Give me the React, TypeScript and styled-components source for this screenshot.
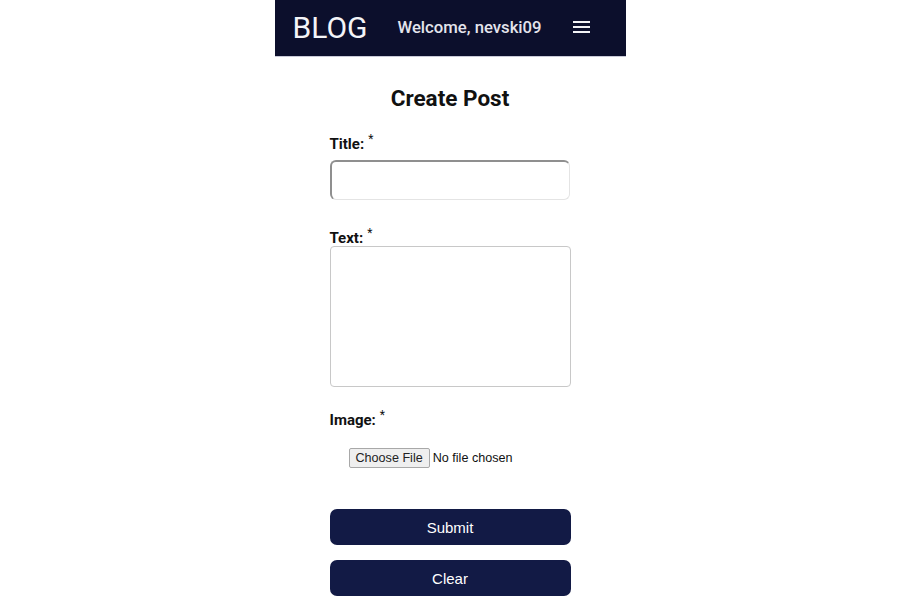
import React from "react";
import styled, { createGlobalStyle } from "styled-components";

const Global = createGlobalStyle`
  html, body { margin: 0; padding: 0; background: #ffffff; }
  body { font-family: Roboto, "Liberation Sans", sans-serif; }
`;

const Page = styled.div`
  width: 900px;
  display: flex;
  flex-direction: column;
  align-items: center;
`;

const Header = styled.header`
  width: 351px;
  height: 57px;
  box-sizing: border-box;
  background: #0c0f2c;
  border-bottom: 1px solid #c9cad8;
  display: flex;
  align-items: center;
  padding: 0 18px 2px;
`;

const Logo = styled.div`
  font-family: Roboto, sans-serif;
  font-size: 30px;
  color: #f4f4f8;
  margin-right: 30px;
`;

const Welcome = styled.div`
  font-family: Roboto, sans-serif;
  font-weight: 500;
  font-size: 16.7px;
  color: #e4e4ec;
  margin-right: 31px;
`;

const Burger = styled.svg`
  display: block;
`;

const Form = styled.form`
  width: 241px;
  display: flex;
  flex-direction: column;
  padding-top: 28px;
`;

const Heading = styled.h2`
  margin: 0;
  text-align: center;
  font-family: Roboto, sans-serif;
  font-weight: 700;
  font-size: 22.5px;
  line-height: 26px;
  color: #111;
`;

const Label = styled.label<{ $mt: number }>`
  display: block;
  margin-top: ${(p) => p.$mt}px;
  font-family: Roboto, sans-serif;
  font-weight: 700;
  font-size: 15px;
  line-height: 16px;
  color: #111;
`;

const Star = styled.span`
  font-weight: 400;
  font-size: 12px;
  line-height: 0;
  margin-left: 4px;
  position: relative;
  top: -6px;
`;

const TextInput = styled.input`
  box-sizing: border-box;
  width: 240px;
  height: 40px;
  margin-top: 8px;
  border-style: solid;
  border-width: 2px 1px 1px 2px;
  border-color: #8f8f8f #e4e4e4 #e4e4e4 #8f8f8f;
  border-radius: 6px;
  background: #fff;
  outline: none;
`;

const TextArea = styled.textarea`
  box-sizing: border-box;
  width: 241px;
  height: 141px;
  margin-top: 0;
  border: 1px solid #c8c8c8;
  border-radius: 4px;
  resize: none;
  outline: none;
`;

const FileRow = styled.div`
  margin-top: 20px;
  padding-left: 19px;
  display: flex;
  align-items: center;
  gap: 3px;
  font-family: "Liberation Sans", Arial, sans-serif;
  font-size: 12.6px;
  color: #111;
`;

const FileButton = styled.label`
  box-sizing: border-box;
  height: 20px;
  padding: 0 6px;
  display: flex;
  align-items: center;
  background: #efefef;
  border: 1px solid #a8a8a8;
  border-radius: 2px;
  color: #222;
`;

const HiddenFile = styled.input`
  display: none;
`;

const Button = styled.button<{ $mt: number }>`
  width: 241px;
  height: 36px;
  margin-top: ${(p) => p.$mt}px;
  border: none;
  border-radius: 7px;
  background: #121a45;
  color: #ffffff;
  font-family: "Liberation Sans", Arial, sans-serif;
  font-size: 15px;
  cursor: pointer;
`;

export default function App() {
  return (
    <Page>
      <Global />
      <Header>
        <Logo>BLOG</Logo>
        <Welcome>Welcome, nevski09</Welcome>
        <Burger width="18" height="14" viewBox="0 0 18 14">
          <rect x="0" y="1" width="17" height="2" fill="#f2f2f6" />
          <rect x="0" y="6" width="17" height="2" fill="#f2f2f6" />
          <rect x="0" y="11" width="17" height="2" fill="#f2f2f6" />
        </Burger>
      </Header>
      <Form onSubmit={(e) => e.preventDefault()}>
        <Heading>Create Post</Heading>
        <Label $mt={25}>
          Title:<Star>*</Star>
        </Label>
        <TextInput type="text" />
        <Label $mt={30}>
          Text:<Star>*</Star>
        </Label>
        <TextArea />
        <Label $mt={25}>
          Image:<Star>*</Star>
        </Label>
        <FileRow>
          <FileButton htmlFor="file">Choose File</FileButton>
          <HiddenFile id="file" type="file" />
          <span>No file chosen</span>
        </FileRow>
        <Button type="submit" $mt={41}>Submit</Button>
        <Button type="button" $mt={15}>Clear</Button>
      </Form>
    </Page>
  );
}
